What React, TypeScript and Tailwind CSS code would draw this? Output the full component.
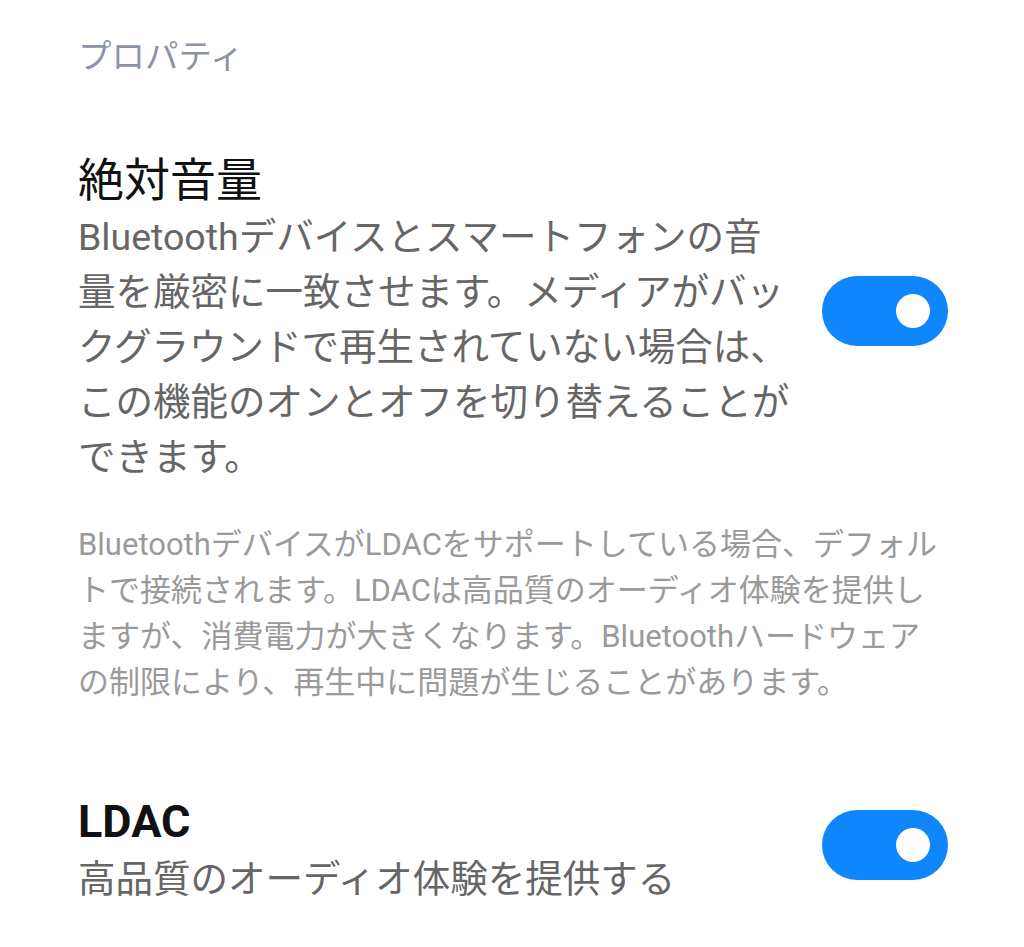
const font = "font-['Roboto','Noto_Sans_CJK_JP',sans-serif]";

function Toggle({ on = true, className = "" }: { on?: boolean; className?: string }) {
  return (
    <div
      className={`shrink-0 w-[126px] h-[70px] rounded-full flex items-center px-[18px] ${
        on ? "bg-[#0f86fc] justify-end" : "bg-[#d9d9d9] justify-start"
      } ${className}`}
    >
      <div className="size-[34px] rounded-full bg-white" />
    </div>
  );
}

export default function App() {
  return (
    <div className={`w-[1024px] h-[947px] bg-white ${font} pl-[78px] pr-[76px] pt-[35px]`}>
      {/* section header */}
      <div className="text-[33.5px] leading-[44px] text-[#8d92a5]">プロパティ</div>

      {/* absolute volume */}
      <div className="mt-[73px] flex items-center justify-between">
        <div className="w-[716px]">
          <div className="text-[46px] leading-[56px] text-[#111]">絶対音量</div>
          <p className="mt-[2px] text-[37.5px] leading-[55px] text-[#666]">
            Bluetoothデバイスとスマートフォンの音量を厳密に一致させます。メディアがバックグラウンドで再生されていない場合は、この機能のオンとオフを切り替えることができます。
          </p>
        </div>
        <Toggle className="mb-[16px]" />
      </div>

      <p className="mt-[37px] text-[31px] leading-[46px] text-[#9a9a9a]">
        BluetoothデバイスがLDACをサポートしている場合、デフォルトで接続されます。LDACは高品質のオーディオ体験を提供しますが、消費電力が大きくなります。Bluetoothハードウェアの制限により、再生中に問題が生じることがあります。
      </p>

      {/* LDAC */}
      <div className="mt-[88px] flex items-center justify-between">
        <div>
          <div className="text-[45px] leading-[56px] font-bold text-[#111]">LDAC</div>
          <div className="mt-[2px] text-[37.5px] leading-[55px] text-[#666]">
            高品質のオーディオ体験を提供する
          </div>
        </div>
        <Toggle className="mb-[12px]" />
      </div>
    </div>
  );
}
